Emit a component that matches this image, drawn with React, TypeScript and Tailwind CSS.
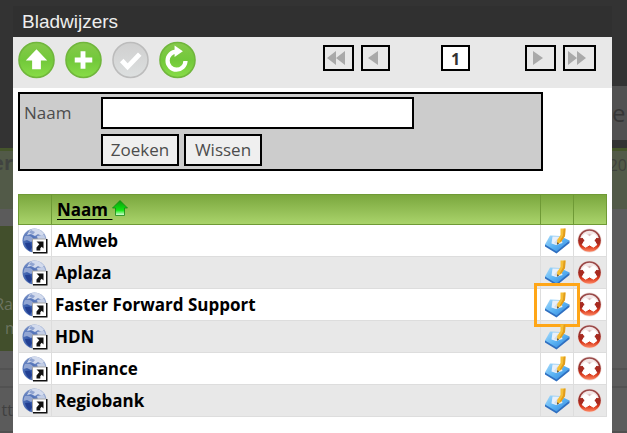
import React, { type ReactElement, type ReactNode } from 'react'

interface Bookmark {
    id: number
    name: string
    highlighted?: boolean
}

const bookmarks: Bookmark[] = [
    { id: 1, name: 'AMweb' },
    { id: 2, name: 'Aplaza' },
    { id: 3, name: 'Faster Forward Support', highlighted: true },
    { id: 4, name: 'HDN' },
    { id: 5, name: 'InFinance' },
    { id: 6, name: 'Regiobank' },
]

// gradients shared by all row icons
function IconDefs() {
    return (
        <svg className="absolute w-0 h-0" aria-hidden="true">
            <defs>
                <linearGradient id="green" x1="0" y1="0" x2="0" y2="1">
                    <stop offset="0" stopColor="#86c94b" />
                    <stop offset="0.5" stopColor="#72c83a" />
                    <stop offset="1" stopColor="#88dd48" />
                </linearGradient>
                <linearGradient id="grey" x1="0" y1="0" x2="0" y2="1">
                    <stop offset="0" stopColor="#cfcfcf" />
                    <stop offset="1" stopColor="#dde0e0" />
                </linearGradient>
                <radialGradient id="globe" cx="0.3" cy="0.65" r="0.7">
                    <stop offset="0" stopColor="#2a4fa3" />
                    <stop offset="0.5" stopColor="#5676ba" />
                    <stop offset="1" stopColor="#93a6cf" />
                </radialGradient>
                <linearGradient id="tablet" x1="0" y1="0" x2="1" y2="1">
                    <stop offset="0" stopColor="#a9dcfb" />
                    <stop offset="0.5" stopColor="#5cb4f4" />
                    <stop offset="1" stopColor="#2b80d8" />
                </linearGradient>
                <linearGradient id="red" x1="0" y1="0" x2="0" y2="1">
                    <stop offset="0" stopColor="#9a5050" />
                    <stop offset="0.5" stopColor="#982822" />
                    <stop offset="0.75" stopColor="#d8371a" />
                    <stop offset="1" stopColor="#ff8a66" />
                </linearGradient>
                <linearGradient id="sort" x1="0" y1="0" x2="0" y2="1">
                    <stop offset="0" stopColor="#0c9a0c" />
                    <stop offset="0.65" stopColor="#12e612" />
                    <stop offset="1" stopColor="#eaffea" />
                </linearGradient>
            </defs>
        </svg>
    )
}

function GlobeIcon() {
    return (
        <svg className="block w-[26px] h-[26px]" viewBox="0 0 26 26" aria-hidden="true">
            <circle cx="12.5" cy="12.5" r="12" fill="url(#globe)" />
            <path d="M8 2 Q13 -0.5 18 2 L22 5.5 L20 8 L16 6 L13 8 L9 6 L5 7 Z" fill="#d3dbed" />
            <path d="M3 8 Q7 7 10 9 L12 12 L9 14 L5 12 L1.5 13 Q1.5 10 3 8 Z" fill="#92a6d3" />
            <path d="M15 8 L22 7 L24 12 H16 Z" fill="#c3cee6" />
            <path d="M9 2 L13 4 L11 6.5 L7 4.5 Z" fill="#90a4d1" />
            <path d="M3 15 L8 15 L10 19 L8 23 Q4 20 3 15 Z" fill="#223f92" />
            <rect x="11" y="11" width="14.5" height="14.5" fill="#111" />
            <rect x="10" y="10.5" width="14" height="13.5" fill="#a6a6a6" />
            <rect x="11" y="11.5" width="13" height="12.5" fill="#fff" />
            <path d="M14.5 13.5 H21.5 V20.5 L19.7 18.8 L18.3 20.2 V22.5 H14.5 V19.5 L17.3 16.3 Z" fill="#111" />
        </svg>
    )
}

function EditIcon() {
    return (
        <svg className="block w-[26px] h-[26px]" viewBox="0 0 26 26" aria-hidden="true">
            <path d="M1 16 L12 21.5 L25.5 12.5 V15 L12.5 25.5 L1 18.5 Z" fill="#2f6fc0" />
            <path d="M1 16.5 L6 7.5 L16 8 L25.5 12.5 L12.5 23.5 Z" fill="url(#tablet)" />
            <path d="M8.5 8.5 L16.5 8.5 L18.5 15 L12 17 L7.5 15.5 Z" fill="#e9f0f9" />
            <path d="M14 10 L10 15 L14 16.5 Z" fill="#d5dde8" />
            <path d="M16.5 0.5 L21.5 0.5 L21 8 L17 14 L13 16.5 L13.2 12 L16.5 7 Z" fill="#f6bf35" />
            <path d="M19.6 0.8 L21.5 0.5 L21 8 L17 14 L15.6 13.4 L19 7.5 Z" fill="#e19c1c" />
            <path d="M13.2 14.2 L15.2 15.2 L13 16.7 Z" fill="#5b5140" />
        </svg>
    )
}

function DeleteIcon() {
    return (
        <svg className="block w-[26px] h-[26px]" viewBox="0 0 26 26" aria-hidden="true">
            <circle cx="12.5" cy="12.5" r="12" fill="#ecdcd9" />
            <circle cx="12.5" cy="12.5" r="11.3" fill="url(#red)" />
            <path d="M3.2 10 A9.6 9.6 0 0 1 21.8 10 Q12.5 13 3.2 10 Z" fill="#f3e6e6" />
            <path d="M1.8 12.5 Q4 8.5 8 11 L7.5 14 L5.5 17 Q2.2 16 1.8 12.5 Z M23.2 12.5 Q21 8.5 17 11 L17.5 14 L19.5 17 Q22.8 16 23.2 12.5 Z" fill="#a82a20" />
            <path d="M10 7.2 L12.5 5.8 L15 7.2 L12.5 8.8 Z" fill="#dcc0c0" />
            <path
                d="M8.3 6 L12.5 8.6 L16.7 6 L19.6 8.6 L17.2 12.4 L19.8 16.8 L16.4 19.2 L12.5 16.9 L8.6 19.2 L5.2 16.8 L7.8 12.4 L5.4 8.6 Z"
                fill="#fff"
                stroke="#fff"
                strokeLinejoin="round"
            />
        </svg>
    )
}

interface RoundButtonProps {
    label: string
    disabled?: boolean
    children: ReactNode
}

function RoundButton({ label, disabled, children }: RoundButtonProps) {
    return (
        <button type="button" aria-label={label} disabled={disabled}>
            <svg className="block w-[37px] h-[38px]" viewBox="0 0 38 38">
                <circle
                    cx="19"
                    cy="19"
                    r="18"
                    fill={disabled ? 'url(#grey)' : 'url(#green)'}
                    stroke={disabled ? '#bcbcbc' : '#70b63c'}
                    strokeWidth="1.6"
                />
                {children}
            </svg>
        </button>
    )
}

interface PagerButtonProps {
    label: string
    className: string
    d: string
}

function PagerButton({ label, className, d }: PagerButtonProps) {
    return (
        <button type="button" aria-label={label} className={`h-[26px] border-2 border-black pl-0.5 ${className}`}>
            <svg className="block w-[19px] h-4" viewBox="0 0 19 16">
                <path d={d} fill="#a9a9a9" />
            </svg>
        </button>
    )
}

// dimmed page, left of the dialog
function BackdropLeft() {
    return (
        <div className="w-[13px] shrink-0 overflow-hidden bg-[#5b5b5b] flex flex-col" aria-hidden="true">
            <div className="h-[148px] bg-[#333333]" />
            <div className="h-[61px] border-t-3 border-[#45552b] bg-[#525a48] flex justify-end text-xl leading-6 font-bold text-[#404340]">
                er
            </div>
            <div className="h-[17px]" />
            <div className="h-[125px] bg-[#424f2c] pt-[66px] flex flex-col items-end text-base text-[#6c7460]">
                <span>Ra</span>
                <span className="w-2">m</span>
            </div>
            <div className="h-[17px]" />
            <div className="h-5 border-y-2 border-[#525252]" />
            <div className="h-[43px] flex items-center justify-end text-base text-[#404040]">tt</div>
            <div className="grow border-t-2 border-[#505050]" />
        </div>
    )
}

function BackdropRight() {
    return (
        <div className="w-[15px] shrink-0 overflow-hidden bg-[#5c5c5c] flex flex-col" aria-hidden="true">
            <div className="h-[86px] bg-[#333333]" />
            <div className="h-[54px] bg-[#515151] flex items-center text-2xl text-[#363636]">e</div>
            <div className="h-2 bg-[#333333]" />
            <div className="h-[61px] border-t-3 border-[#45552b] bg-[#525a48] text-base leading-7 text-[#3f423c] flex justify-end">20</div>
            <div className="h-[159px]" />
            <div className="h-5 border-y-2 border-[#525252]" />
            <div className="h-[43px]" />
            <div className="grow border-t-2 border-[#505050]" />
        </div>
    )
}

function Toolbar() {
    return (
        <div className="bg-[#e8e8e8] h-[51px] flex items-start justify-between pl-[5px] pr-4">
            <div className="flex gap-2.5 pt-1">
                <RoundButton label="Omhoog">
                    <path d="M19 8 L30 19.5 H23.5 V28.5 H14.5 V19.5 H8 Z" fill="#fff" />
                </RoundButton>
                <RoundButton label="Toevoegen">
                    <path d="M16 10 H21 V16.5 H28 V21.5 H21 V28 H16 V21.5 H10 V16.5 H16 Z" fill="#fff" />
                </RoundButton>
                <RoundButton label="Bevestigen" disabled>
                    <path d="M10 19.5 L16 26 L28.5 13" fill="none" stroke="#fff" strokeWidth="5" />
                </RoundButton>
                <RoundButton label="Vernieuwen">
                    <path d="M18 10.5 A9.2 9.2 0 1 0 27.2 20" fill="none" stroke="#fff" strokeWidth="4.4" />
                    <path d="M16 4 L24.5 10 L16 16 Z" fill="#fff" />
                </RoundButton>
            </div>
            <nav className="flex pt-2" aria-label="Pagina's">
                <PagerButton label="Eerste" className="w-[31px]" d="M0 8 L9 1 V15 Z M9 8 L18 1 V15 Z" />
                <PagerButton label="Vorige" className="w-[29px] ml-[7px]" d="M3 8 L13 1 V15 Z" />
                <button
                    type="button"
                    className="w-[29px] h-[26px] mx-[51px] border-2 border-black bg-white text-base leading-6 font-bold text-[#333]"
                >
                    1
                </button>
                <PagerButton label="Volgende" className="w-[31px] ml-1" d="M4 1 L14 8 L4 15 Z" />
                <PagerButton label="Laatste" className="w-[33px] ml-[7px]" d="M1 1 L10 8 L1 15 Z M10 1 L19 8 L10 15 Z" />
            </nav>
        </div>
    )
}

function SearchForm() {
    return (
        <form
            className="mt-1 ml-[5px] mr-[69px] border-2 border-black bg-[#cccccc] flex py-[3px] pl-1 text-[17px] text-[#4c4c4c]"
            onSubmit={(e) => e.preventDefault()}
        >
            <label htmlFor="naam" className="w-[77px] h-8 leading-8">Naam</label>
            <div className="flex flex-col gap-[5px]">
                <input id="naam" type="text" className="w-[313px] h-8 border-2 border-black bg-white px-1" />
                <div className="flex gap-[5px]">
                    <button type="submit" className="w-[78px] h-8 border-2 border-black bg-[#efefef]">Zoeken</button>
                    <button type="reset" className="w-[78px] h-8 border-2 border-black bg-[#efefef]">Wissen</button>
                </div>
            </div>
        </form>
    )
}

function BookmarkRow({ item }: { item: Bookmark }) {
    return (
        <tr className="h-8 odd:bg-white even:bg-[#e8e8e8]">
            <td className="border border-[#dddddd] pl-[3px]">
                <GlobeIcon />
            </td>
            <td className="border border-[#dddddd] pl-[3px] font-bold text-black">{item.name}</td>
            <td className="border border-[#dddddd] pl-[3px]">
                <button type="button" aria-label={`${item.name} bewerken`} className="relative block">
                    <EditIcon />
                    {item.highlighted && (
                        <span className="absolute -inset-x-[10px] -inset-y-[9px] border-3 border-[#ffa617]" />
                    )}
                </button>
            </td>
            <td className="border border-[#dddddd] pl-[3px]">
                <button type="button" aria-label={`${item.name} verwijderen`} className="block">
                    <DeleteIcon />
                </button>
            </td>
        </tr>
    )
}

export default function App(): ReactElement {
    return (
        <div className="min-h-screen flex bg-[#333333] font-['Open_Sans','Noto_Sans',sans-serif]">
            <IconDefs />
            <BackdropLeft />
            <div className="grow min-w-0 bg-white" role="dialog" aria-labelledby="dialog-title">
                <div className="bg-[#333333] pt-1.5">
                    <h1
                        id="dialog-title"
                        className="h-[31px] bg-[#303030] pl-[9px] text-[19px] leading-[31px] text-[#eeeeee] font-['Liberation_Sans',Arial,sans-serif]"
                    >
                        Bladwijzers
                    </h1>
                </div>
                <Toolbar />
                <SearchForm />
                <div className="mt-[23px] ml-[5px] mr-[5px]">
                    <table className="w-full table-fixed border-collapse text-[17px] leading-6">
                        <colgroup>
                            <col className="w-[33px]" />
                            <col />
                            <col className="w-[33px]" />
                            <col className="w-[33px]" />
                        </colgroup>
                        <thead>
                            <tr className="h-[30px] bg-linear-to-b from-[#7ba73e] to-[#abd56c]">
                                <th className="border border-[#6f9a36]" />
                                <th className="border border-[#6f9a36] pl-[5px] text-left font-bold text-black">
                                    <a href="#naam" className="flex items-center">
                                        <span className="underline underline-offset-3">Naam&nbsp;</span>
                                        <svg className="w-4 h-4 mb-1" viewBox="0 0 16 16" aria-hidden="true">
                                            <path
                                                d="M8 0.5 L15.5 8 H12.5 V15.5 H3.5 V8 H0.5 Z"
                                                fill="url(#sort)"
                                                stroke="#128a12"
                                                strokeWidth="0.8"
                                            />
                                        </svg>
                                    </a>
                                </th>
                                <th className="border border-[#6f9a36]" />
                                <th className="border border-[#6f9a36]" />
                            </tr>
                        </thead>
                        <tbody>
                            {bookmarks.map((item) => (
                                <BookmarkRow key={item.id} item={item} />
                            ))}
                        </tbody>
                    </table>
                </div>
            </div>
            <BackdropRight />
        </div>
    )
}
